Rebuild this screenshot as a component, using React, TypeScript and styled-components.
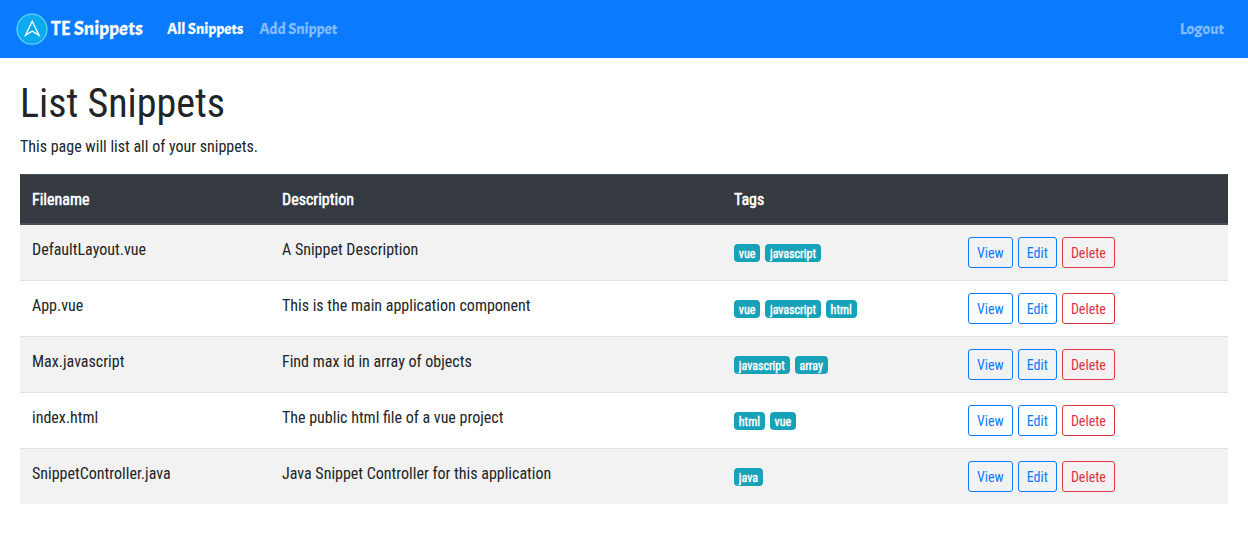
import React from 'react';
import styled, { createGlobalStyle } from 'styled-components';

const GlobalStyle = createGlobalStyle`
  *, *::before, *::after { box-sizing: border-box; }
  body {
    margin: 0;
    background: #fff;
    color: #212529;
    font-family: 'Roboto Condensed', Roboto, 'Liberation Sans', sans-serif;
    font-stretch: 75%;
    font-size: 16px;
    line-height: 24px;
  }
`;

const Navbar = styled.nav`
  display: flex;
  align-items: center;
  height: 58px;
  padding: 0 24px 0 16px;
  background: #0a7aff;
  font-family: Acme, 'Open Sans', sans-serif;
  font-weight: 400;
  -webkit-text-stroke: 0.3px currentColor;
`;

const Brand = styled.a`
  display: flex;
  align-items: center;
  gap: 3px;
  margin-right: 24px;
  color: #fff;
  font-size: 20px;
  line-height: 30px;
  white-space: nowrap;
`;

const NavLinks = styled.div`
  display: flex;
  flex: 1;
  gap: 16px;
`;

const NavLink = styled.a<{ $active?: boolean }>`
  color: ${p => (p.$active ? '#fff' : '#85bcff')};
  white-space: nowrap;
`;

const Main = styled.main`
  padding: 22px 20px 0;
`;

const Title = styled.h1`
  margin: 0 0 7px;
  font-size: 40px;
  font-weight: 400;
  line-height: 48px;
`;

const Intro = styled.p`
  margin: 0 0 15px;
`;

const Table = styled.table`
  width: 100%;
  table-layout: fixed;
  border-collapse: separate;
  border-spacing: 0;
`;

const Col = styled.col<{ $w?: number }>`
  width: ${p => (p.$w ? `${p.$w}px` : 'auto')};
`;

const HeadCell = styled.th`
  height: 51px;
  padding: 13px 12px 11px;
  border-top: 1px solid #454d55;
  border-bottom: 2px solid #454d55;
  background: #343a40;
  color: #fff;
  font-weight: 400;
  -webkit-text-stroke: 0.5px currentColor;
  text-align: left;
`;

const Row = styled.tr`
  &:nth-child(odd) { background: #f2f2f2; }
  & + & td { border-top: 1px solid #dee2e6; }
`;

const Cell = styled.td`
  height: 55px;
  padding: 13px 12px 11px;
  vertical-align: top;
  white-space: nowrap;

  ${Row} + ${Row} & { height: 56px; }
`;

const ControlCell = styled(Cell)`
  padding: 12px;
`;

const Tags = styled.div`
  display: flex;
  gap: 5px;
  padding-top: 7px;
`;

const Tag = styled.span`
  height: 18px;
  padding: 4px 4.8px 2px;
  border-radius: 4px;
  background: #17a2b8;
  color: #fff;
  font-size: 12px;
  font-weight: 400;
  -webkit-text-stroke: 0.4px currentColor;
  line-height: 12px;
`;

const Actions = styled.div`
  display: flex;
  gap: 5px;
`;

const Button = styled.button<{ $danger?: boolean }>`
  height: 31px;
  padding: 5px 8px 3px;
  border: 1px solid currentColor;
  border-radius: 3px;
  background: transparent;
  color: ${p => (p.$danger ? '#dc3545' : '#0a7aff')};
  font: inherit;
  font-size: 14px;
  line-height: 21px;
`;

const Logo = () => (
  <svg width="32" height="32" viewBox="0 0 32 32" fill="none">
    <circle cx="16" cy="16.2" r="15" fill="#0baaf0" stroke="#62d8f6" strokeWidth="1.2" />
    <path d="M16.2 8.3 L9.6 22.2 L16.2 18.2 L23 22.2 Z" stroke="#fff" strokeWidth="1.4" />
  </svg>
);

const snippets = [
  { file: 'DefaultLayout.vue', description: 'A Snippet Description', tags: ['vue', 'javascript'] },
  { file: 'App.vue', description: 'This is the main application component', tags: ['vue', 'javascript', 'html'] },
  { file: 'Max.javascript', description: 'Find max id in array of objects', tags: ['javascript', 'array'] },
  { file: 'index.html', description: 'The public html file of a vue project', tags: ['html', 'vue'] },
  { file: 'SnippetController.java', description: 'Java Snippet Controller for this application', tags: ['java'] },
];

export default function App() {
  return (
    <>
      <GlobalStyle />
      <Navbar>
        <Brand><Logo />TE Snippets</Brand>
        <NavLinks>
          <NavLink $active>All Snippets</NavLink>
          <NavLink>Add Snippet</NavLink>
        </NavLinks>
        <NavLink>Logout</NavLink>
      </Navbar>
      <Main>
        <Title>List Snippets</Title>
        <Intro>This page will list all of your snippets.</Intro>
        <Table>
          <colgroup><Col $w={250} /><Col $w={452} /><Col $w={234} /><Col /></colgroup>
          <thead>
            <tr>
              <HeadCell>Filename</HeadCell>
              <HeadCell>Description</HeadCell>
              <HeadCell>Tags</HeadCell>
              <HeadCell />
            </tr>
          </thead>
          <tbody>
            {snippets.map(s => (
              <Row key={s.file}>
                <Cell>{s.file}</Cell>
                <Cell>{s.description}</Cell>
                <ControlCell><Tags>{s.tags.map(t => <Tag key={t}>{t}</Tag>)}</Tags></ControlCell>
                <ControlCell>
                  <Actions>
                    <Button>View</Button>
                    <Button>Edit</Button>
                    <Button $danger>Delete</Button>
                  </Actions>
                </ControlCell>
              </Row>
            ))}
          </tbody>
        </Table>
      </Main>
    </>
  );
}
